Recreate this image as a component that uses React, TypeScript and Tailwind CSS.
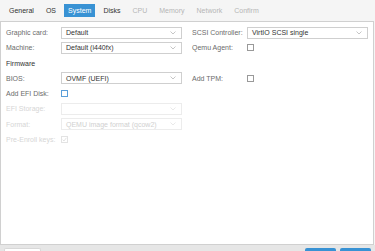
import React from "react";

const tabs = [
  { name: "General", state: "on" },
  { name: "OS", state: "on" },
  { name: "System", state: "active" },
  { name: "Disks", state: "on" },
  { name: "CPU", state: "off" },
  { name: "Memory", state: "off" },
  { name: "Network", state: "off" },
  { name: "Confirm", state: "off" },
];

function Chevron({ faded }: { faded?: boolean }) {
  return (
    <svg width="6" height="4" viewBox="0 0 6 4" className="shrink-0">
      <polyline
        points="0.5,0.5 3,3 5.5,0.5"
        fill="none"
        stroke={faded ? "#e3e3e3" : "#b8b8b8"}
        strokeWidth="0.8"
      />
    </svg>
  );
}

function Select({ value, disabled }: { value?: string; disabled?: boolean }) {
  return (
    <div
      className={`flex h-[12px] w-[121px] items-center justify-between border pl-[4px] pr-[5px] ${
        disabled ? "border-[#ececec] text-[#d0d0d0]" : "border-[#cfcfcf] text-[#333]"
      }`}
    >
      <span className="leading-none">{value}</span>
      <Chevron faded={disabled} />
    </div>
  );
}

function Check({ focus, checked, disabled }: { focus?: boolean; checked?: boolean; disabled?: boolean }) {
  return (
    <div
      className={`flex h-[7px] w-[7px] items-center justify-center border ${
        focus ? "border-[#5b9fd9]" : disabled ? "border-[#e3e3e3]" : "border-[#999]"
      } bg-white`}
    >
      {checked && (
        <svg width="5" height="5" viewBox="0 0 5 5">
          <polyline points="0.6,2.6 2,4 4.4,0.8" fill="none" stroke="#dcdcdc" strokeWidth="0.8" />
        </svg>
      )}
    </div>
  );
}

function Row({
  label,
  disabled,
  children,
}: {
  label: string;
  disabled?: boolean;
  children?: React.ReactNode;
}) {
  return (
    <div className="flex h-[13px] items-center">
      <span className={`w-[55px] shrink-0 leading-none ${disabled ? "text-[#d6d6d6]" : "text-[#6b6b6b]"}`}>
        {label}
      </span>
      {children}
    </div>
  );
}

export default function App() {
  return (
    <div
      className="flex h-[251px] w-[375px] flex-col overflow-hidden bg-[#f5f5f5] text-[7px]"
      style={{ fontFamily: '"Liberation Sans", Arial, sans-serif' }}
    >
      <div className="flex h-[21px] items-center gap-[4px] pl-[5px]">
        {tabs.map((t) => (
          <div
            key={t.name}
            className={`flex h-[13px] items-center px-[4px] ${
              t.state === "active"
                ? "bg-[#3892d4] text-white"
                : t.state === "on"
                ? "text-[#333]"
                : "text-[#b5b5b5]"
            }`}
          >
            <span className="leading-none">{t.name}</span>
          </div>
        ))}
      </div>

      <div className="mr-[1px] flex flex-1 gap-[10px] border border-[#d0d0d0] bg-white pl-[5px] pt-[4px]">
        <div className="flex flex-col gap-[2.3px]">
          <Row label="Graphic card:">
            <Select value="Default" />
          </Row>
          <Row label="Machine:">
            <Select value="Default (i440fx)" />
          </Row>
          <div className="flex h-[13px] items-center text-[#333]">
            <span className="leading-none">Firmware</span>
          </div>
          <Row label="BIOS:">
            <Select value="OVMF (UEFI)" />
          </Row>
          <Row label="Add EFI Disk:">
            <Check focus />
          </Row>
          <Row label="EFI Storage:" disabled>
            <Select disabled />
          </Row>
          <Row label="Format:" disabled>
            <Select value="QEMU image format (qcow2)" disabled />
          </Row>
          <Row label="Pre-Enroll keys:" disabled>
            <Check checked disabled />
          </Row>
        </div>
        <div className="flex flex-col gap-[2.3px]">
          <Row label="SCSI Controller:">
            <Select value="VirtIO SCSI single" />
          </Row>
          <Row label="Qemu Agent:">
            <Check />
          </Row>
          <div className="h-[13px]" />
          <Row label="Add TPM:">
            <Check />
          </Row>
        </div>
      </div>

      <div className="flex h-[6px] shrink-0 items-end justify-between bg-[#e6e6e6] pl-[4px] pr-[4px]">
        <div className="h-[3px] w-[37px] rounded-t-[2px] border border-b-0 border-[#d8d8d8] bg-white" />
        <div className="flex gap-[4px]">
          <div className="h-[3px] w-[31px] rounded-t-[2px] bg-[#3892d4]" />
          <div className="h-[3px] w-[31px] rounded-t-[2px] bg-[#3892d4]" />
        </div>
      </div>
    </div>
  );
}
